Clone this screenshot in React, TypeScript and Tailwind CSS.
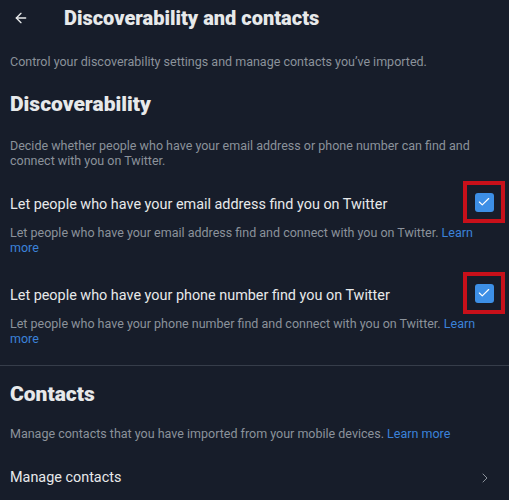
import { ArrowLeft, ChevronRight, Check } from 'lucide-react';

type Option = {
  label: string;
  description: string;
};

const options: Option[] = [
  {
    label: 'Let people who have your email address find you on Twitter',
    description:
      'Let people who have your email address find and connect with you on Twitter.',
  },
  {
    label: 'Let people who have your phone number find you on Twitter',
    description:
      'Let people who have your phone number find and connect with you on Twitter.',
  },
];

function Checkbox() {
  return (
    <div className="border-[4px] border-[#c8101a] w-[42px] h-[42px] flex items-center justify-center shrink-0">
      <div className="w-[19px] h-[19px] rounded-[3px] bg-[#3d8fe6] flex items-center justify-center">
        <Check className="w-[14px] h-[14px] text-white" strokeWidth={2} />
      </div>
    </div>
  );
}

export default function App() {
  return (
    <div className="w-[509px] h-[500px] overflow-hidden bg-[#171d2a] text-[#e7e9ea] font-['Roboto',sans-serif]">
      <header className="flex items-center h-[36px] pl-[13px]">
        <ArrowLeft className="w-[16px] h-[16px] text-[#e7e9ea]" strokeWidth={2} />
        <h1 className="ml-[35px] text-[20px] font-black">
          Discoverability and contacts
        </h1>
      </header>

      <p className="px-[10px] mt-[18px] text-[12.5px] text-[#8b929b] leading-[16px]">
        Control your discoverability settings and manage contacts you’ve imported.
      </p>

      <h2 className="px-[10px] mt-[22px] text-[21px] font-black leading-[24px]">
        Discoverability
      </h2>

      <p className="pl-[10px] w-[472px] mt-[22px] text-[12.5px] text-[#8b929b] leading-[15px]">
        Decide whether people who have your email address or phone number can find and
        connect with you on Twitter.
      </p>

      <div className="mt-[13px] flex flex-col gap-[17px]">
        {options.map((o) => (
          <div key={o.label} className="pl-[10px] pr-[4px]">
            <div className="flex items-center justify-between">
              <span className="text-[14.4px] leading-[20px] mt-[5px]">{o.label}</span>
              <Checkbox />
            </div>
            <p className="mt-[2px] w-[470px] text-[12.5px] text-[#8b929b] leading-[15px]">
              {o.description}{' '}
              <span className="text-[#3b82d9]">Learn</span>{' '}
              <span className="text-[#3b82d9]">more</span>
            </p>
          </div>
        ))}
      </div>

      <div className="mt-[19px] border-t border-[#363d4a]" />

      <h2 className="px-[10px] mt-[16px] text-[21px] font-black leading-[24px]">
        Contacts
      </h2>

      <p className="px-[10px] mt-[20px] text-[12.5px] text-[#8b929b] leading-[16px]">
        Manage contacts that you have imported from your mobile devices.{' '}
        <span className="text-[#3b82d9]">Learn more</span>
      </p>

      <div className="mt-[26px] pl-[10px] pr-[16px] flex items-center justify-between">
        <span className="text-[14.4px] leading-[20px]">Manage contacts</span>
        <ChevronRight className="w-[16px] h-[16px] text-[#8b929b]" strokeWidth={1.5} />
      </div>
    </div>
  );
}
